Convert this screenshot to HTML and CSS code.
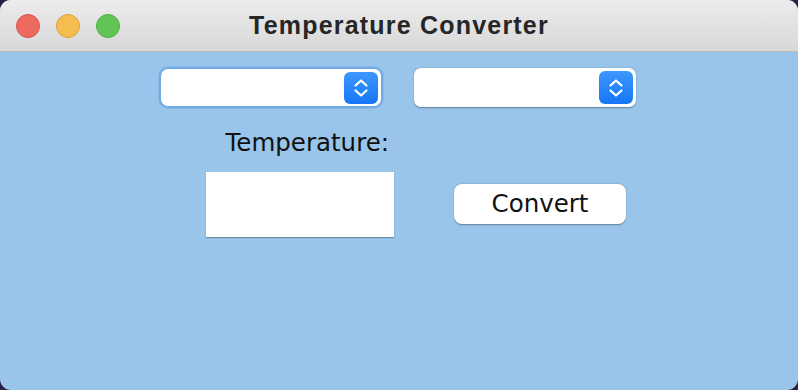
FILE: index.html
```html
<!DOCTYPE html>
<html>
<head>
<meta charset="utf-8">
<link rel="stylesheet" href="styles.css">
</head>
<body>
<div class="window">
  <div class="titlebar">
    <div class="lights">
      <span class="light red"></span>
      <span class="light yellow"></span>
      <span class="light green"></span>
    </div>
    <div class="title">Temperature Converter</div>
  </div>
  <div class="content">
    <div class="row combos">
      <div class="combo focused">
        <span class="arrows">
          <svg width="16" height="24" viewBox="0 0 16 24"><path d="M2.5 9.5 L8 4.5 L13.5 9.5 M2.5 14.5 L8 19.5 L13.5 14.5" fill="none" stroke="#fff" stroke-width="2.2" stroke-linecap="round" stroke-linejoin="round"/></svg>
        </span>
      </div>
      <div class="combo">
        <span class="arrows">
          <svg width="16" height="24" viewBox="0 0 16 24"><path d="M2.5 9.5 L8 4.5 L13.5 9.5 M2.5 14.5 L8 19.5 L13.5 14.5" fill="none" stroke="#fff" stroke-width="2.2" stroke-linecap="round" stroke-linejoin="round"/></svg>
        </span>
      </div>
    </div>
    <div class="row label-row">
      <div class="label">Temperature:</div>
    </div>
    <div class="row input-row">
      <div class="field"></div>
      <button class="btn">Convert</button>
    </div>
  </div>
</div>
</body>
</html>
```
FILE: styles.css
```css
html, body {
  margin: 0;
  padding: 0;
  background: #2b1d47;
  width: 798px;
  height: 390px;
  overflow: hidden;
}
.window {
  width: 798px;
  height: 390px;
  border-radius: 11px;
  overflow: hidden;
  background: #98c5e9;
  display: flex;
  flex-direction: column;
}
.titlebar {
  height: 51px;
  flex: none;
  background: linear-gradient(#ececec, #d8d8d8);
  border-bottom: 1px solid #b9b9b9;
  position: relative;
  display: flex;
  align-items: center;
  justify-content: center;
}
.lights {
  position: absolute;
  left: 16px;
  top: 14px;
  display: flex;
  gap: 16px;
}
.light {
  width: 24px;
  height: 24px;
  border-radius: 50%;
  box-sizing: border-box;
}
.red { background: #ee6a5f; border: 1px solid #d8544a; }
.yellow { background: #f5bd4f; border: 1px solid #d9a13b; }
.green { background: #61c454; border: 1px solid #4fae44; }
.title {
  font-family: "Liberation Sans", Arial, sans-serif;
  font-weight: bold;
  font-size: 25px;
  letter-spacing: 1.2px;
  color: #262626;
  margin-top: -1px;
}
.content {
  flex: 1;
  display: flex;
  flex-direction: column;
}
.row { display: flex; }
.combos {
  margin-top: 16px;
  padding-left: 160px;
  gap: 33px;
}
.combo {
  width: 222px;
  height: 39px;
  box-sizing: border-box;
  background: #fff;
  border-radius: 7px;
  box-shadow: 0 0.5px 1.5px rgba(0,0,0,0.35);
  display: flex;
  justify-content: flex-end;
  align-items: center;
  padding-right: 3px;
}
.combo.focused {
  box-shadow: 0 0 0 2px #73a9e6, 0 0 0 3px #8cb9ea;
  width: 220px;
  height: 37px;
  margin: 1px;
}
.combo.focused + .combo { margin-left: -1px; }
.arrows {
  width: 34px;
  height: 33px;
  border-radius: 6px;
  background: linear-gradient(#3d97fd, #1577f6);
  display: flex;
  align-items: center;
  justify-content: center;
}
.combo.focused .arrows { height: 32px; }
.label-row {
  margin-top: 20px;
}
.label {
  width: 389px;
  text-align: right;
  font-family: "DejaVu Sans", sans-serif;
  font-size: 24.5px;
  line-height: 32px;
  color: #111;
}
.input-row {
  margin-top: 13px;
  padding-left: 206px;
  align-items: center;
  gap: 60px;
}
.field {
  width: 188px;
  height: 65px;
  background: #fff;
  box-shadow: 0 1px 1px rgba(0,0,0,0.3);
}
.btn {
  width: 172px;
  height: 40px;
  margin-top: -2px;
  border: none;
  border-radius: 8px;
  background: #fff;
  box-shadow: 0 0.5px 1.5px rgba(0,0,0,0.35);
  font-family: "DejaVu Sans", sans-serif;
  font-size: 24.5px;
  color: #111;
  padding: 0;
}
```
